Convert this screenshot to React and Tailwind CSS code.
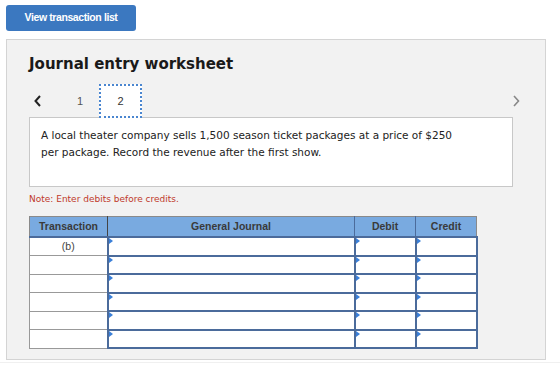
import React from 'react';

const ROWS = ['(b)', '', '', '', '', ''];

const Triangle = () => (
  <span className="absolute left-0 top-0 w-0 h-0 border-t-[3px] border-b-[3px] border-l-[4px] border-t-transparent border-b-transparent border-l-[#3a7fd8]" />
);

const InputCell = ({ w }) => (
  <td className={`relative p-0 ${w} h-[18.5px] bg-white border-2 border-[#4b6b9b]`}>
    <Triangle />
  </td>
);

export default function App() {
  return (
    <div className="w-[560px] h-[373px] bg-white overflow-hidden pt-[4px] pl-[6px]" style={{ fontFamily: '"DejaVu Sans", Verdana, sans-serif' }}>
      <button className="h-[26px] w-[130px] rounded-[3px] bg-[#3b78c0] text-white text-[10.5px] font-bold tracking-[-0.4px] font-['Liberation_Sans',Arial,sans-serif]">
        View transaction list
      </button>

      <div className="mt-[8px] w-[540px] h-[321px] bg-[#f2f2f2] border border-[#d4d4d4] pl-[22px] pt-[13px]">
        <h1 className="text-[15px] font-bold text-[#1a1a1a] leading-[22px]">Journal entry worksheet</h1>

        <div className="mt-[9px] w-[492px] h-[34px] flex items-center">
          <svg width="10" height="14" viewBox="0 0 10 14" className="ml-[4px]">
            <path d="M7 2 L2.5 7 L7 12" fill="none" stroke="#222" strokeWidth="2" />
          </svg>
          <span className="ml-[34px] text-[11px] text-[#555] font-['Liberation_Sans',Arial,sans-serif]">1</span>
          <div className="ml-[16px] w-[43px] h-[34px] bg-white border-2 border-dotted border-[#4a86d0] flex items-center justify-center text-[11px] text-[#333] relative z-10 font-['Liberation_Sans',Arial,sans-serif]">
            2
          </div>
          <svg width="10" height="14" viewBox="0 0 10 14" className="ml-auto">
            <path d="M3 2 L7.5 7 L3 12" fill="none" stroke="#888" strokeWidth="1.6" />
          </svg>
        </div>

        <div className="-mt-[1px] w-[484px] h-[70px] bg-white border border-[#c8c8c8] pl-[11px] pt-[9px] text-[10.5px] leading-[17px] text-[#222]">
          A local theater company sells 1,500 season ticket packages at a price of $250
          <br />
          per package. Record the revenue after the first show.
        </div>

        <p className="mt-[5px] text-[9px] leading-[14px] text-[#c0392b]">Note: Enter debits before credits.</p>

        <table className="mt-[10px] border-collapse font-['Liberation_Sans',Arial,sans-serif]">
          <thead>
            <tr className="h-[21px] bg-[#79aae0] text-[10.5px] font-bold text-[#3a3a3a]">
              <th className="w-[78px] border border-[#8a8a8a] border-b-2 border-b-[#4b6b9b] border-r-[#444] font-bold">Transaction</th>
              <th className="w-[247px] border border-[#8a8a8a] border-b-2 border-b-[#4b6b9b] border-r-[#4b6b9b] font-bold">General Journal</th>
              <th className="w-[61px] border border-[#8a8a8a] border-b-2 border-b-[#4b6b9b] border-r-[#4b6b9b] font-bold">Debit</th>
              <th className="w-[61px] border border-[#8a8a8a] border-b-2 border-b-[#4b6b9b] font-bold">Credit</th>
            </tr>
          </thead>
          <tbody>
            {ROWS.map((t, i) => (
              <tr key={i}>
                <td className="w-[78px] h-[18.5px] p-0 bg-white border border-[#999] text-center text-[10.5px] text-[#444]">{t}</td>
                <InputCell w="w-[247px]" />
                <InputCell w="w-[61px]" />
                <InputCell w="w-[61px]" />
              </tr>
            ))}
          </tbody>
        </table>
      </div>
      <div className="ml-[-6px] mt-[2px] w-[560px] h-px bg-[#f0f0f0]" />
    </div>
  );
}
